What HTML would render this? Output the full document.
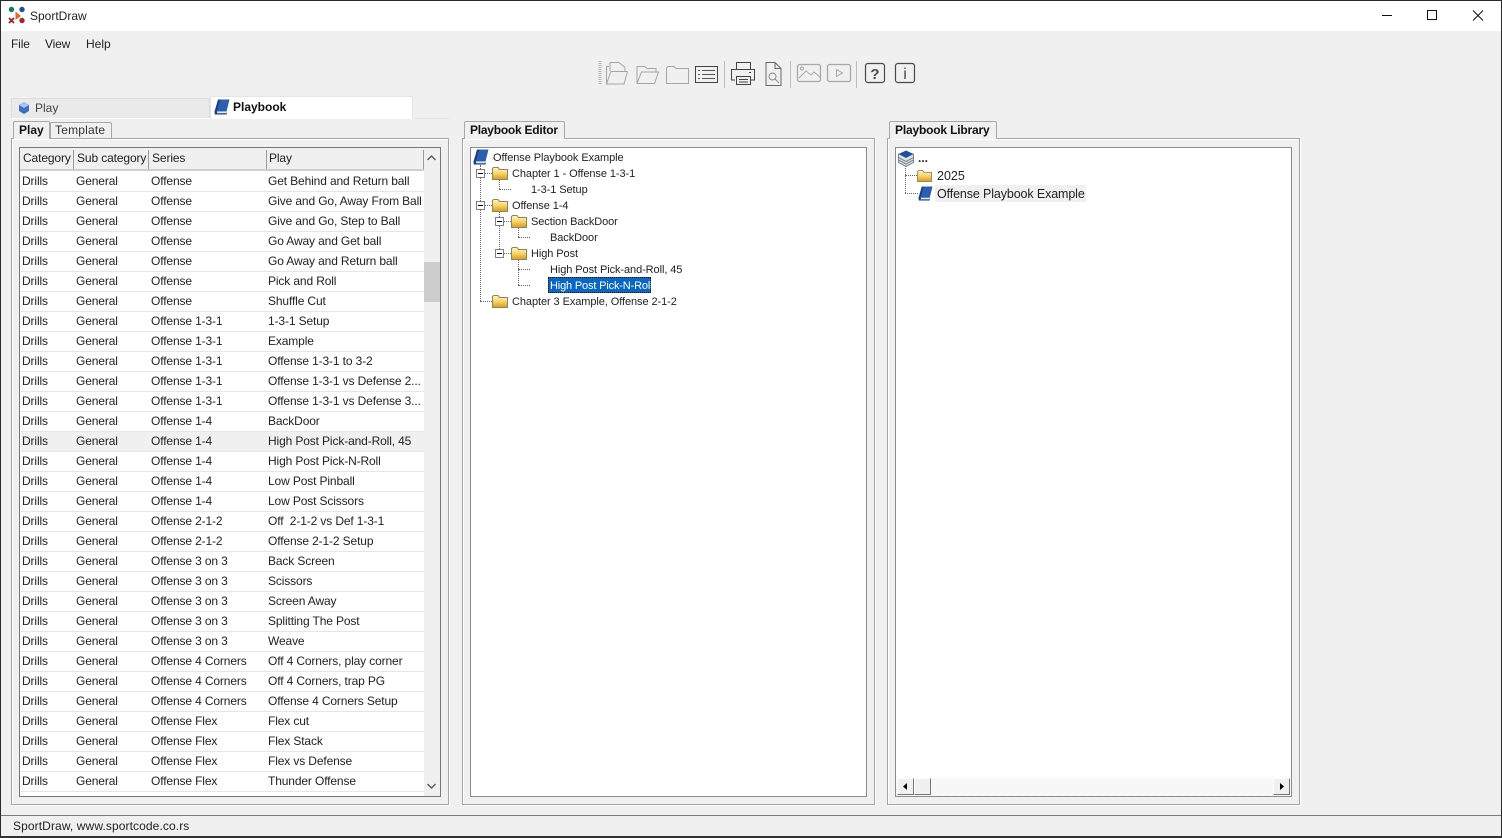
<!DOCTYPE html>
<html><head><meta charset="utf-8"><title>SportDraw</title>
<style>
*{box-sizing:border-box}
html,body{margin:0;padding:0;width:1502px;height:838px;overflow:hidden;background:#f0f0f0;font-family:"Liberation Sans",sans-serif;font-size:12px;color:#222}
.a{position:absolute}
.t{position:absolute;white-space:pre;line-height:16px}
.box{position:absolute;background:#fff;border:1px solid #8c8c8c}
.grp{position:absolute;border:1px solid #a5a5a5;box-shadow:inset 1px 1px 0 #fff,1px 1px 0 #fff}
.tab{position:absolute;background:#f0f0f0;border:1px solid #a8a8a8;border-bottom:0;border-radius:2px 2px 0 0;font-weight:bold;line-height:16px;white-space:pre;letter-spacing:-.24px}
.hd{letter-spacing:-.12px}
.r{position:absolute;left:1px;width:403px;height:20px;border-bottom:1px solid #e6e6e6;background:#fff;letter-spacing:-.13px}
.r span{position:absolute;top:1px;line-height:16px;white-space:pre}
.r span:nth-child(1){left:1px}.r span:nth-child(2){left:55px}.r span:nth-child(3){left:130px}.r span:nth-child(4){left:247px}
.n{font-size:11px;letter-spacing:-.08px}
.d{position:absolute;border-left:1px dotted #666}
.h{position:absolute;border-top:1px dotted #666}
.m{position:absolute;width:9px;height:9px;border:1px solid #808080;background:#fff}
.m:after{content:"";position:absolute;left:1px;top:3px;width:5px;height:1px;background:#000}
svg{position:absolute;overflow:visible}
</style></head><body>
<svg width="0" height="0" style="position:absolute"><defs>
<linearGradient id="fg" x1="0" y1="0" x2="0" y2="1"><stop offset="0" stop-color="#fff6c8"/><stop offset=".5" stop-color="#f8d468"/><stop offset="1" stop-color="#d59a20"/></linearGradient>
<symbol id="folder" viewBox="0 0 16 13"><path d="M.5 12.500V1.500L1.500.5H6L7.500 2.500H15.500V12.500Z" fill="url(#fg)" stroke="#94835a"/></symbol>
<symbol id="book" viewBox="0 0 16 16"><path d="M4 .5H15.500L12.500 12.500H1.500Z" fill="#2b5fae"/><path d="M4 .8 .5 12.500 .8 15.500H12.500L13 13.500H3.200L2.800 12.500 6 .8Z" fill="#173f85"/><path d="M3 13.100H12.600L12.300 14.300H3Z" fill="#dfe7f5"/></symbol>
</defs></svg>

<!-- window frame / title bar -->
<div class="a" style="left:0;top:0;width:1502px;height:31px;background:#fff"></div>
<div class="a" style="left:0;top:0;width:1502px;height:1px;background:#2a2a2a"></div>
<div class="a" style="left:0;top:0;width:1px;height:838px;background:#2a2a2a"></div>
<div class="a" style="left:1501px;top:0;width:1px;height:838px;background:#2a2a2a"></div>
<div class="a" style="left:0;top:836px;width:1502px;height:2px;background:#333"></div>
<svg style="left:8px;top:6px" width="18" height="18" viewBox="0 0 18 18">
<circle cx="3.500" cy="3.500" r="2.700" fill="#11805a"/><circle cx="14" cy="3.500" r="2.700" fill="#1c4f9e"/><circle cx="14" cy="14.500" r="2.700" fill="#b0202a"/>
<path d="M1 12 6 17M6 12 1 17" stroke="#a81c2a" stroke-width="1.800"/><path d="M7.500 5.500 13 10 7.500 14Z" fill="#dd6a20"/></svg>
<div class="t" style="left:30px;top:8px;font-size:12px;color:#222">SportDraw</div>
<svg style="left:1380px;top:10px" width="112" height="12">
<path d="M2 5.500H12" stroke="#111" fill="none"/><rect x="47.500" y=".5" width="9" height="9" fill="none" stroke="#111"/>
<path d="M93 .5 103 10.500M103 .5 93 10.500" stroke="#111" fill="none"/></svg>

<!-- menu -->
<div class="t" style="left:11px;top:36px;letter-spacing:-.15px">File</div>
<div class="t" style="left:45px;top:36px;letter-spacing:-.15px">View</div>
<div class="t" style="left:86px;top:36px">Help</div>

<!-- toolbar -->
<svg style="left:596px;top:58px" width="325" height="32" fill="none">
<path d="M4 3V27" stroke="#b5b5b5" stroke-width="3" stroke-dasharray="1 1"/>
<g stroke="#a6a6a6">
<path d="M10.500 26V8.500H13M14 13V4.500H23L29 9.500V13M31.500 13.500H15L10.500 26H28L31.500 13.500"/>
<path d="M41 25.500V8.500H49L51 10.500H60V14M62.500 14H45.500L41 25.500H58.500L62.500 14Z"/>
<path d="M70.500 25.500V10L72 8.500H78L80 10.500H92.500V25.500Z"/>
</g>
<g stroke="#444">
<rect x="99.500" y="8.500" width="22" height="16"/>
<path d="M102 12.500H104M106 12.500H119M102 16.500H104M106 16.500H119M102 20.500H104M106 20.500H119" stroke="#555"/>
<path d="M128.500 3V30" stroke="#bdbdbd"/>
<path d="M140.500 11V4.500H154.500V11M139 22H135.500V11.500H158.500V22H155M140.500 18.500H154.500V26.500H140.500ZM143 21.500H152M143 24H152M153 14.500H155" />
<path d="M170 4.500H179L185 10.500V27.500H170ZM179 4.500V10.500H185" stroke="#666"/>
<circle cx="176.500" cy="18.500" r="3.500" stroke="#8a8a8a"/><path d="M179 21 183 25" stroke="#8a8a8a"/>
<path d="M194.500 3V30" stroke="#bdbdbd"/>
</g>
<g stroke="#a8a8a8">
<rect x="201.500" y="6.500" width="23" height="17" rx="2" stroke-width="1.300"/>
<circle cx="206" cy="10.500" r="1.500"/><path d="M203 20 210 13 215 17 218 14 224 19"/>
<rect x="231.500" y="6.500" width="23" height="17" rx="2" stroke-width="1.300"/>
<path d="M240.500 11.500 246.500 15 240.500 18.500Z"/>
<path d="M260.500 3V30" stroke="#bdbdbd"/>
</g>
<g stroke="#4a4a4a" stroke-width="1.200">
<rect x="269.500" y="5.500" width="19" height="19" rx="2.500"/>
<rect x="299.500" y="5.500" width="19" height="19" rx="2.500"/>
</g>
<text x="279" y="21" text-anchor="middle" font-family="Liberation Sans" font-weight="bold" font-size="15" fill="#4a4a4a">?</text>
<text x="309" y="21" text-anchor="middle" font-family="Liberation Sans" font-size="16" fill="#4a4a4a">i</text>
</svg>

<!-- main tabs -->
<div class="a" style="left:11px;top:98px;width:199px;height:20px;background:#eaeaea;border:1px solid #dcdcdc;border-bottom:0"></div>
<svg style="left:19px;top:102px" width="10" height="12" viewBox="0 0 10 12"><path d="M5 0 10 3V9L5 12 0 9V3Z" fill="#3f6fc4"/><path d="M5 0 10 3 5 6 0 3Z" fill="#a9c4ee"/></svg>
<div class="t" style="left:35px;top:100px;color:#444">Play</div>
<div class="a" style="left:210px;top:96px;width:203px;height:23px;background:#fff;border:1px solid #e4e4e4;border-bottom:0"></div>
<svg style="left:214px;top:99px" width="16" height="16"><use href="#book" width="16" height="16"/></svg>
<div class="t" style="left:233px;top:99px;font-weight:bold;color:#111">Playbook</div>
<div class="a" style="left:11px;top:118px;width:199px;height:1px;background:#fff"></div>
<div class="a" style="left:413px;top:118px;width:36px;height:1px;background:#e4e4e4"></div>

<!-- left panel -->
<div class="grp" style="left:11px;top:138px;width:438px;height:667px"></div>
<div class="tab" style="left:13px;top:121px;width:37px;height:18px;padding:0 0 0 5px;color:#111;letter-spacing:0">Play</div>
<div class="tab" style="left:50px;top:122px;width:62px;height:16px;padding:0 0 0 4px;font-weight:normal;color:#333;letter-spacing:.2px;line-height:14px">Template</div>

<div class="box" style="left:19px;top:147px;width:422px;height:650px;border-color:#777;overflow:hidden">
 <div class="a" style="left:0;top:0;width:420px;height:23px;background:#f0f0f0;border-bottom:2px solid #cfcfcf"></div>
 <div class="t hd" style="left:3px;top:2px">Category</div>
 <div class="t hd" style="left:57px;top:2px">Sub category</div>
 <div class="t hd" style="left:132px;top:2px">Series</div>
 <div class="t hd" style="left:249px;top:2px">Play</div>
 <div class="a" style="left:53px;top:2px;width:1px;height:19px;background:#999"></div>
 <div class="a" style="left:128px;top:2px;width:1px;height:19px;background:#999"></div>
 <div class="a" style="left:246px;top:2px;width:1px;height:19px;background:#999"></div>
 <div class="a" style="left:403px;top:2px;width:1px;height:19px;background:#999"></div>
 <div class="a" style="left:0;top:23px;width:404px;height:625px;background:#fff">
 <div class="r" style="top:1px"><span>Drills</span><span>General</span><span>Offense</span><span>Get Behind and Return ball</span></div>
 <div class="r" style="top:21px"><span>Drills</span><span>General</span><span>Offense</span><span>Give and Go, Away From Ball</span></div>
 <div class="r" style="top:41px"><span>Drills</span><span>General</span><span>Offense</span><span>Give and Go, Step to Ball</span></div>
 <div class="r" style="top:61px"><span>Drills</span><span>General</span><span>Offense</span><span>Go Away and Get ball</span></div>
 <div class="r" style="top:81px"><span>Drills</span><span>General</span><span>Offense</span><span>Go Away and Return ball</span></div>
 <div class="r" style="top:101px"><span>Drills</span><span>General</span><span>Offense</span><span>Pick and Roll</span></div>
 <div class="r" style="top:121px"><span>Drills</span><span>General</span><span>Offense</span><span>Shuffle Cut</span></div>
 <div class="r" style="top:141px"><span>Drills</span><span>General</span><span>Offense 1-3-1</span><span>1-3-1 Setup</span></div>
 <div class="r" style="top:161px"><span>Drills</span><span>General</span><span>Offense 1-3-1</span><span>Example</span></div>
 <div class="r" style="top:181px"><span>Drills</span><span>General</span><span>Offense 1-3-1</span><span>Offense 1-3-1 to 3-2</span></div>
 <div class="r" style="top:201px"><span>Drills</span><span>General</span><span>Offense 1-3-1</span><span>Offense 1-3-1 vs Defense 2...</span></div>
 <div class="r" style="top:221px"><span>Drills</span><span>General</span><span>Offense 1-3-1</span><span>Offense 1-3-1 vs Defense 3...</span></div>
 <div class="r" style="top:241px"><span>Drills</span><span>General</span><span>Offense 1-4</span><span>BackDoor</span></div>
 <div class="r" style="top:261px;background:#f0f0f0"><span>Drills</span><span>General</span><span>Offense 1-4</span><span>High Post Pick-and-Roll, 45</span></div>
 <div class="r" style="top:281px"><span>Drills</span><span>General</span><span>Offense 1-4</span><span>High Post Pick-N-Roll</span></div>
 <div class="r" style="top:301px"><span>Drills</span><span>General</span><span>Offense 1-4</span><span>Low Post Pinball</span></div>
 <div class="r" style="top:321px"><span>Drills</span><span>General</span><span>Offense 1-4</span><span>Low Post Scissors</span></div>
 <div class="r" style="top:341px"><span>Drills</span><span>General</span><span>Offense 2-1-2</span><span>Off  2-1-2 vs Def 1-3-1</span></div>
 <div class="r" style="top:361px"><span>Drills</span><span>General</span><span>Offense 2-1-2</span><span>Offense 2-1-2 Setup</span></div>
 <div class="r" style="top:381px"><span>Drills</span><span>General</span><span>Offense 3 on 3</span><span>Back Screen</span></div>
 <div class="r" style="top:401px"><span>Drills</span><span>General</span><span>Offense 3 on 3</span><span>Scissors</span></div>
 <div class="r" style="top:421px"><span>Drills</span><span>General</span><span>Offense 3 on 3</span><span>Screen Away</span></div>
 <div class="r" style="top:441px"><span>Drills</span><span>General</span><span>Offense 3 on 3</span><span>Splitting The Post</span></div>
 <div class="r" style="top:461px"><span>Drills</span><span>General</span><span>Offense 3 on 3</span><span>Weave</span></div>
 <div class="r" style="top:481px"><span>Drills</span><span>General</span><span>Offense 4 Corners</span><span>Off 4 Corners, play corner</span></div>
 <div class="r" style="top:501px"><span>Drills</span><span>General</span><span>Offense 4 Corners</span><span>Off 4 Corners, trap PG</span></div>
 <div class="r" style="top:521px"><span>Drills</span><span>General</span><span>Offense 4 Corners</span><span>Offense 4 Corners Setup</span></div>
 <div class="r" style="top:541px"><span>Drills</span><span>General</span><span>Offense Flex</span><span>Flex cut</span></div>
 <div class="r" style="top:561px"><span>Drills</span><span>General</span><span>Offense Flex</span><span>Flex Stack</span></div>
 <div class="r" style="top:581px"><span>Drills</span><span>General</span><span>Offense Flex</span><span>Flex vs Defense</span></div>
 <div class="r" style="top:601px"><span>Drills</span><span>General</span><span>Offense Flex</span><span>Thunder Offense</span></div>
 </div>
 <!-- scrollbar -->
 <div class="a" style="left:404px;top:0;width:16px;height:648px;background:#f0f0f0"></div>
 <svg style="left:404px;top:0" width="16" height="648" fill="none"><path d="M3.500 12 7.500 8 11.500 12" stroke="#606060" stroke-width="1.500"/><path d="M3.500 636 7.500 640 11.500 636" stroke="#606060" stroke-width="1.500"/></svg>
 <div class="a" style="left:404px;top:114px;width:16px;height:40px;background:#cdcdcd"></div>
</div>

<!-- editor -->
<div class="grp" style="left:462px;top:138px;width:413px;height:667px"></div>
<div class="tab" style="left:464px;top:121px;width:101px;height:18px;padding:0 0 0 5px;color:#111">Playbook Editor</div>
<div class="box" style="left:470px;top:147px;width:397px;height:650px"></div>

<div class="d" style="left:480px;top:165px;height:136px"></div>
<div class="h" style="left:480px;top:301px;width:12px"></div>
<div class="h" style="left:485px;top:173px;width:7px"></div>
<div class="h" style="left:485px;top:205px;width:7px"></div>
<div class="d" style="left:499px;top:180px;height:9px"></div>
<div class="h" style="left:499px;top:189px;width:12px"></div>
<div class="d" style="left:499px;top:212px;height:37px"></div>
<div class="h" style="left:504px;top:221px;width:7px"></div>
<div class="h" style="left:504px;top:253px;width:7px"></div>
<div class="d" style="left:518px;top:228px;height:9px"></div>
<div class="h" style="left:518px;top:237px;width:12px"></div>
<div class="d" style="left:518px;top:260px;height:25px"></div>
<div class="h" style="left:518px;top:269px;width:12px"></div>
<div class="h" style="left:518px;top:285px;width:12px"></div>
<div class="m" style="left:476px;top:169px"></div>
<div class="m" style="left:476px;top:201px"></div>
<div class="m" style="left:495px;top:217px"></div>
<div class="m" style="left:495px;top:249px"></div>
<svg style="left:473px;top:149px" width="16" height="16"><use href="#book" width="16" height="16"/></svg>
<svg style="left:492px;top:167px" width="16" height="13"><use href="#folder" width="16" height="13"/></svg>
<svg style="left:492px;top:199px" width="16" height="13"><use href="#folder" width="16" height="13"/></svg>
<svg style="left:511px;top:215px" width="16" height="13"><use href="#folder" width="16" height="13"/></svg>
<svg style="left:511px;top:247px" width="16" height="13"><use href="#folder" width="16" height="13"/></svg>
<svg style="left:492px;top:295px" width="16" height="13"><use href="#folder" width="16" height="13"/></svg>
<div class="t n" style="left:493px;top:150px">Offense Playbook Example</div>
<div class="t n" style="left:512px;top:166px">Chapter 1 - Offense 1-3-1</div>
<div class="t n" style="left:531px;top:182px">1-3-1 Setup</div>
<div class="t n" style="left:512px;top:198px">Offense 1-4</div>
<div class="t n" style="left:531px;top:214px">Section BackDoor</div>
<div class="t n" style="left:550px;top:230px">BackDoor</div>
<div class="t n" style="left:531px;top:246px">High Post</div>
<div class="t n" style="left:550px;top:262px">High Post Pick-and-Roll, 45</div>
<div class="a" style="left:548px;top:277px;width:103px;height:16px;background:#0a66c2;border:1px dotted #111"></div>
<div class="t n" style="left:550px;top:278px;color:#fff;letter-spacing:-.16px">High Post Pick-N-Roll</div>
<div class="t n" style="left:512px;top:294px">Chapter 3 Example, Offense 2-1-2</div>

<!-- library -->
<div class="grp" style="left:887px;top:138px;width:413px;height:667px"></div>
<div class="tab" style="left:889px;top:121px;width:108px;height:18px;padding:0 0 0 5px;color:#111;letter-spacing:-.18px">Playbook Library</div>
<div class="box" style="left:895px;top:147px;width:397px;height:650px"></div>
<div class="d" style="left:905px;top:166px;height:27px"></div>
<div class="h" style="left:905px;top:175px;width:12px"></div>
<div class="h" style="left:905px;top:193px;width:13px"></div>
<svg style="left:898px;top:150px" width="16" height="17" viewBox="0 0 16 17"><path d="M.5 4V12.500L8 16.500 15.500 12.500V4Z" fill="#dfe3e8" stroke="#7d8794"/><path d="M.5 7.500 8 11.500 15.500 7.500M.5 10 8 14 15.500 10" stroke="#7d8794" fill="none"/><path d="M8 .5 15.500 4 8 8 .5 4Z" fill="#1f4f9c"/></svg>
<div class="t" style="left:918px;top:150px;font-weight:bold">...</div>
<svg style="left:917px;top:170px" width="15" height="12"><use href="#folder" width="15" height="12"/></svg>
<div class="t" style="left:937px;top:168px;font-size:12.500px">2025</div>
<div class="a" style="left:935px;top:185px;width:151px;height:17px;background:#f0f0f0"></div>
<svg style="left:918px;top:186px" width="15" height="15"><use href="#book" width="15" height="15"/></svg>
<div class="t" style="left:937px;top:186px;font-size:12.500px;letter-spacing:-.12px">Offense Playbook Example</div>

<div class="a" style="left:896px;top:778px;width:395px;height:18px;background:repeating-conic-gradient(#f0f0f0 0 25%,#fff 0 50%) 0 0/2px 2px"></div>
<div class="a" style="left:897px;top:778px;width:17px;height:17px;background:#f0f0f0;border:1px solid;border-color:#fff #777 #777 #fff"></div>
<div class="a" style="left:914px;top:778px;width:17px;height:17px;background:#f0f0f0;border:1px solid;border-color:#fff #777 #777 #fff"></div>
<div class="a" style="left:1273px;top:778px;width:17px;height:17px;background:#f0f0f0;border:1px solid;border-color:#fff #777 #777 #fff"></div>
<svg style="left:897px;top:778px" width="393" height="17"><path d="M10 5V12L6 8.500Z" fill="#000"/><path d="M383 5V12L387 8.500Z" fill="#000"/></svg>

<!-- status -->
<div class="a" style="left:1px;top:815px;width:1500px;height:1px;background:#7a7a7a"></div>
<div class="t" style="left:13px;top:818px;color:#222;letter-spacing:.1px">SportDraw, www.sportcode.co.rs</div>
</body></html>
